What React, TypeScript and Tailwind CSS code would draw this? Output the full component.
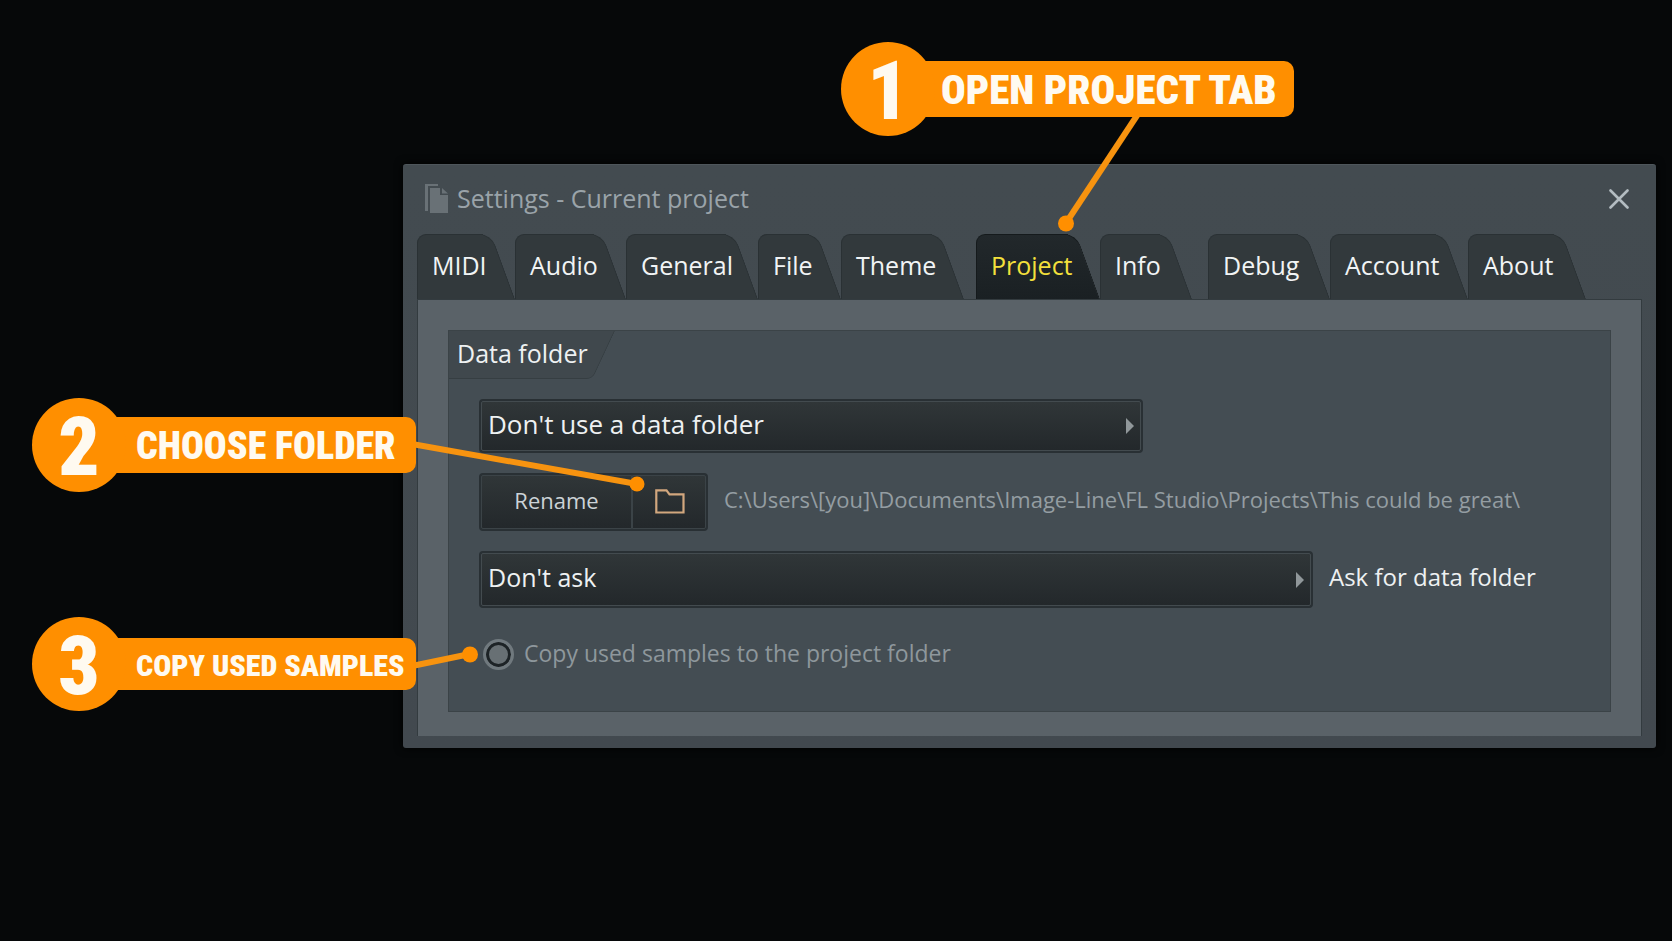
import React from "react";

type Tab = { label: string; size: string; active?: boolean };

const tabs: Tab[] = [
  { label: "MIDI", size: "w-[98px]" },
  { label: "Audio", size: "w-[111px]" },
  { label: "General", size: "w-[132px]" },
  { label: "File", size: "w-[83px]" },
  { label: "Theme", size: "w-[123px] mr-3" },
  { label: "Project", size: "w-[124px]", active: true },
  { label: "Info", size: "w-[92px] mr-4" },
  { label: "Debug", size: "w-[122px]" },
  { label: "Account", size: "w-[138px]" },
  { label: "About", size: "w-[118px]" },
];

function TabButton({ label, size, active }: Tab) {
  const fill = active
    ? "bg-linear-to-b from-[#22282b] to-[#1a2023] border-[#151a1c]"
    : "bg-[#32393c] border-[#2a3134]";
  return (
    <button
      type="button"
      role="tab"
      aria-selected={!!active}
      className={`relative h-[65px] shrink-0 pb-1 pl-[15px] text-left text-[25px] leading-[50px] ${size} ${active ? "z-10 text-[#f3e03c]" : "text-[#f1f4f5]"}`}
    >
      <span className={`absolute inset-y-0 right-0 w-12 origin-bottom skew-x-[20deg] rounded-tr-[12px] border-t border-r ${fill}`} />
      <span className={`absolute inset-y-0 right-8 left-0 rounded-tl-[9px] border-t border-l ${fill}`} />
      <span className="relative">{label}</span>
    </button>
  );
}

function Dropdown({ id, label, value, options, size, textSize }: { id: string; label: string; value: string; options: string[]; size: string; textSize: string }) {
  return (
    <div className={`relative rounded-[4px] border-2 border-[#293034] bg-[#293034] ${size}`}>
      <select
        id={id}
        aria-label={label}
        defaultValue={value}
        className={`block size-full appearance-none rounded-[2px] border border-[#434b4f] bg-linear-to-b from-[#303638] to-[#23282b] pr-10 pb-1 pl-[6px] text-[#eef1f2] outline-none ${textSize}`}
      >
        {options.map((o) => (
          <option key={o}>{o}</option>
        ))}
      </select>
      <svg className="pointer-events-none absolute top-1/2 right-[7px] -translate-y-1/2" width="8" height="16" viewBox="0 0 8 16" aria-hidden="true">
        <path d="M0 0L8 8L0 16Z" fill="#90979a" />
      </svg>
    </div>
  );
}

function Callout({ n, text, place, bar, textSize }: { n: string; text: string; place: string; bar: string; textSize: string }) {
  return (
    <div className={`absolute flex h-[94px] items-center font-['Roboto_Condensed','Roboto',sans-serif] font-black text-[#fffaf0] ${place}`}>
      <div className="z-10 flex size-[94px] shrink-0 items-center justify-center rounded-full bg-[#ff8f00] pt-1 text-[81px] leading-none">
        {n}
      </div>
      <div className={`-ml-5 flex flex-1 items-center rounded-r-[10px] bg-[#ff8f00] pt-[3px] whitespace-nowrap ${bar} ${textSize}`}>{text}</div>
    </div>
  );
}

export default function App() {
  return (
    <div className="relative min-h-screen overflow-hidden bg-[#060809] pt-[164px] pr-4 pl-[403px] font-['Open_Sans',sans-serif]">
      <main className="rounded-[3px] border-t border-[#4e565b] bg-linear-to-b from-[#434b50] to-[#42494f] pr-[14px] pb-3 pl-[14px] shadow-[0_0_8px_#000]">
        <header className="flex h-[69px] items-center pb-[2px] pl-2">
          <svg width="23" height="29" viewBox="0 0 23 29" className="shrink-0" aria-hidden="true">
            <path d="M0 0H13V2H3V27H0Z" fill="#697176" />
            <path d="M5 4H15V11H23V29H5Z" fill="#697176" />
            <path d="M17 4L23 9.500H17Z" fill="#697176" />
          </svg>
          <h1 className="ml-[9px] flex-1 text-[25px] text-[#9aa3a9]">Settings - Current project</h1>
          <button type="button" aria-label="Close" className="mr-[13px] p-0">
            <svg width="20" height="20" viewBox="0 0 20 20" fill="none" stroke="#b3bcc1" strokeWidth="2.600" strokeLinecap="round">
              <path d="M1.500 1.500L18.500 18.500M18.500 1.500L1.500 18.500" />
            </svg>
          </button>
        </header>

        <div role="tablist" className="flex">
          {tabs.map((t) => (
            <TabButton key={t.label} {...t} />
          ))}
        </div>

        <section className="border-x border-t border-[#333b3f] bg-[#5a6268] px-[30px] pt-[30px] pb-6">
          <div className="border border-[#3b4347] bg-[#444d53] pb-[39px]">
            <div className="relative h-12 w-[166px] overflow-hidden">
              <span className="absolute inset-y-0 right-0 -left-8 origin-top skew-x-[-25deg] rounded-br-[6px] border-r border-b border-[#363e42] bg-[#40484d]" />
              <span className="absolute bottom-0 left-0 h-px w-10 bg-[#363e42]" />
              <h2 className="relative pl-2 text-[25px] leading-[44px] text-[#eef1f2]">Data folder</h2>
            </div>

            <div className="mt-5 flex flex-col pl-[30px]">
              <Dropdown
                id="mode"
                label="Data folder mode"
                value="Don't use a data folder"
                options={["Don't use a data folder"]}
                size="h-[54px] w-[664px]"
                textSize="text-[26px]"
              />

              <div className="mt-5 flex items-center">
                <div className="flex h-[58px] w-[229px] shrink-0 rounded-[4px] border-2 border-[#293034] bg-[#293034]">
                  <button type="button" className="w-[151px] rounded-l-[2px] border border-[#3b4347] bg-linear-to-b from-[#303638] to-[#23282b] pb-1 text-[22px] text-[#ccd3d7]">
                    Rename
                  </button>
                  <button type="button" aria-label="Choose folder" className="flex flex-1 items-center justify-center rounded-r-[2px] border border-[#3b4347] bg-linear-to-b from-[#303638] to-[#23282b] pb-[2px] pl-[2px]">
                    <svg width="30" height="25" viewBox="0 0 30 25" fill="none" stroke="#d2a77e" strokeWidth="2.200" aria-hidden="true">
                      <path d="M1.300 23.500V1.300H11.500L14.500 5.300H28.500V23.500Z" />
                    </svg>
                  </button>
                </div>
                <span className="pb-[6px] pl-4 text-[22px] whitespace-nowrap text-[#949da2]">
                  C:\Users\[you]\Documents\Image-Line\FL Studio\Projects\This could be great\
                </span>
              </div>

              <div className="mt-5 flex items-center">
                <Dropdown id="ask" label="Ask for data folder" value="Don't ask" options={["Don't ask"]} size="h-[57px] w-[834px] shrink-0" textSize="text-[25px]" />
                <label htmlFor="ask" className="pb-[6px] pl-4 text-[24px] whitespace-nowrap text-[#eef1f2]">
                  Ask for data folder
                </label>
              </div>

              <div className="mt-7 flex h-9 items-center pl-1">
                <input
                  id="copy"
                  type="checkbox"
                  className="size-[31px] shrink-0 appearance-none rounded-full border-3 border-[#70797e] bg-[#687074] shadow-[inset_0_0_0_3px_#1d2326]"
                />
                <label htmlFor="copy" className="pb-[2px] pl-[10px] text-[23px] whitespace-nowrap text-[#8e979c]">
                  Copy used samples to the project folder
                </label>
              </div>
            </div>
          </div>
        </section>
      </main>

      <svg className="pointer-events-none absolute top-0 left-0" width="1300" height="720" viewBox="0 0 1300 720" fill="none" stroke="#f7930f" strokeWidth="6" aria-hidden="true">
        <path d="M1138 114L1066 223" />
        <path d="M412 444L637 484" />
        <path d="M412 666L470 654" />
        <g fill="#ff8f00" stroke="none">
          <circle cx="1066" cy="223.500" r="8" />
          <circle cx="637" cy="484" r="7.500" />
          <circle cx="470" cy="654.500" r="8" />
        </g>
      </svg>

      <Callout n="1" text="OPEN PROJECT TAB" place="top-[42px] left-[841px] w-[453px]" bar="h-14 pl-[26px]" textSize="text-[41px]" />
      <Callout n="2" text="CHOOSE FOLDER" place="top-[398px] left-8 w-[384px]" bar="h-14 pl-[30px]" textSize="text-[38px]" />
      <Callout n="3" text="COPY USED SAMPLES" place="top-[617px] left-8 w-[384px]" bar="h-[52px] pl-[30px]" textSize="text-[30px]" />
    </div>
  );
}
